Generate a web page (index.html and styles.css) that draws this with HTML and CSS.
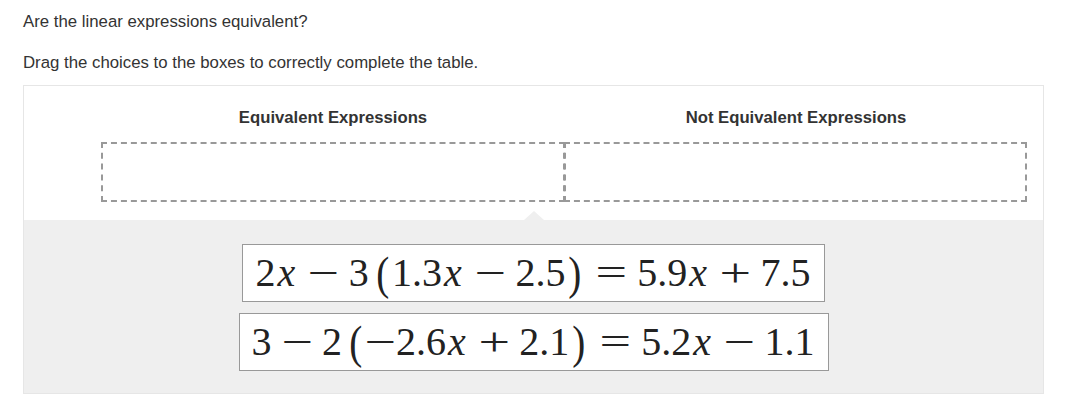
FILE: index.html
```html
<!DOCTYPE html>
<html>
<head>
    <title>Are the linear expressions equivalent?</title>
    <link rel="stylesheet" href="styles.css">
</head>
<body>
    <p class="prompt">Are the linear expressions equivalent?</p>
    <p class="prompt">Drag the choices to the boxes to correctly complete the table.</p>

    <div class="board">
        <div class="table">
            <div class="spacer"></div>
            <div class="col-head">Equivalent Expressions</div>
            <div class="col-head">Not Equivalent Expressions</div>
            <div class="spacer"></div>
            <div class="drop"></div>
            <div class="drop drop-right"></div>
        </div>

        <!-- choices to drag into the table -->
        <div class="bank">
            <div class="tile">
                <span class="math">2<i>x</i><span class="op bin">−</span>3<span class="paren open">(</span>1.3<i>x</i><span class="op bin">−</span>2.5<span class="paren">)</span><span class="op rel">=</span>5.9<i>x</i><span class="op bin">+</span>7.5</span>
            </div>
            <div class="tile">
                <span class="math">3<span class="op bin">−</span>2<span class="paren open">(</span><span class="op neg">−</span>2.6<i>x</i><span class="op bin">+</span>2.1<span class="paren">)</span><span class="op rel">=</span>5.2<i>x</i><span class="op bin">−</span>1.1</span>
            </div>
        </div>
    </div>
</body>
</html>
```

FILE: styles.css
```css
body {
    font-family: "Liberation Sans", Arial, sans-serif;
    color: #333;
    margin: 0;
    padding: 12px 24px 0 23px;
}
.prompt {
    font-size: 16.8px;
    line-height: 20px;
    margin: 0 0 21px 0;
}
.board {
    border: 1px solid #e6e6e6;
    margin-top: -9px;
}
.table {
    display: grid;
    grid-template-columns: 77px 464px 462px;
    padding: 22px 0 18px 0;
}
.col-head {
    font-weight: bold;
    font-size: 16.7px;
    line-height: 20px;
    text-align: center;
    padding-bottom: 14px;
}
.drop {
    height: 56px;
    border: 2px dashed #999;
}
.drop-right {
    margin-left: -1px;
}
.bank {
    position: relative;
    background-color: #efefef;
    padding: 24px 0 22px 0;
    display: flex;
    flex-direction: column;
    align-items: center;
    gap: 11px;
}
.bank::before {
    content: "";
    position: absolute;
    top: -9px;
    left: 50%;
    margin-left: -10px;
    border-left: 10px solid transparent;
    border-right: 10px solid transparent;
    border-bottom: 9px solid #efefef;
}
.tile {
    background-color: #fff;
    border: 1px solid #999;
    height: 56px;
    display: flex;
    align-items: center;
    padding: 0 13px 0 12px;
}
.math {
    font-family: "Liberation Serif", "DejaVu Serif", serif;
    font-size: 40px;
    color: #222;
    white-space: nowrap;
}
.math i {
    font-style: italic;
    margin: 0 3px 0 2px;
}
.op {
    display: inline-block;
    transform: scaleX(1.4);
}
.bin {
    margin: 0 14px;
}
.rel {
    margin: 0 15px;
}
.neg {
    margin: 0 4px;
}
.paren {
    display: inline-block;
    font-size: 1.15em;
    font-weight: 300;
    transform: scaleX(0.85);
    vertical-align: -3px;
    margin: 0 2px;
}
.paren.open {
    margin-left: 6px;
}
```
